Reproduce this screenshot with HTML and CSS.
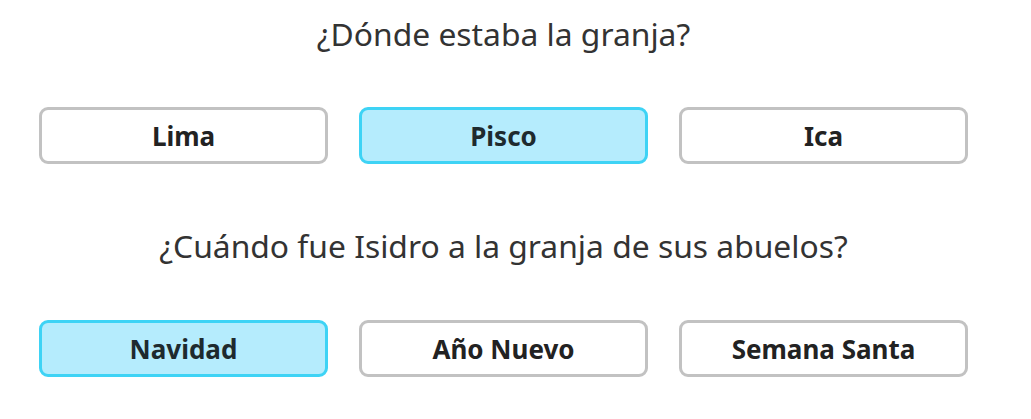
FILE: index.html
```html
<!DOCTYPE html>
<html>
<head>
<meta charset="utf-8">
<link rel="stylesheet" href="styles.css">
</head>
<body>
<div class="quiz">
  <section class="question">
    <h2 class="prompt">¿Dónde estaba la granja?</h2>
    <div class="options">
      <button class="option">Lima</button>
      <button class="option selected">Pisco</button>
      <button class="option">Ica</button>
    </div>
  </section>
  <section class="question">
    <h2 class="prompt">¿Cuándo fue Isidro a la granja de sus abuelos?</h2>
    <div class="options">
      <button class="option selected">Navidad</button>
      <button class="option">Año Nuevo</button>
      <button class="option">Semana Santa</button>
    </div>
  </section>
</div>
</body>
</html>
```
FILE: styles.css
```css
html, body {
  margin: 0;
  padding: 0;
  background: #ffffff;
}
body {
  font-family: "Noto Sans", "Open Sans", sans-serif;
}
.quiz {
  width: 929px;
  margin-left: 39px;
  display: flex;
  flex-direction: column;
}
.question {
  display: flex;
  flex-direction: column;
}
.prompt {
  margin: 0;
  font-weight: 400;
  font-size: 31.8px;
  line-height: 40px;
  color: #333333;
  text-align: center;
  padding-top: 14px;
  padding-bottom: 53px;
}
.question + .question .prompt {
  padding-top: 62px;
  padding-bottom: 54px;
}
.options {
  display: grid;
  grid-template-columns: repeat(3, 1fr);
  gap: 31px;
}
.option {
  height: 57px;
  border: 3px solid #c2c2c2;
  border-radius: 9px;
  background: #ffffff;
  font-family: inherit;
  font-size: 26px;
  font-weight: 700;
  color: #222222;
  padding: 0;
}
.option.selected {
  background: #b5ecfd;
  border-color: #3ed3f5;
  color: #1e2a2e;
}
```
